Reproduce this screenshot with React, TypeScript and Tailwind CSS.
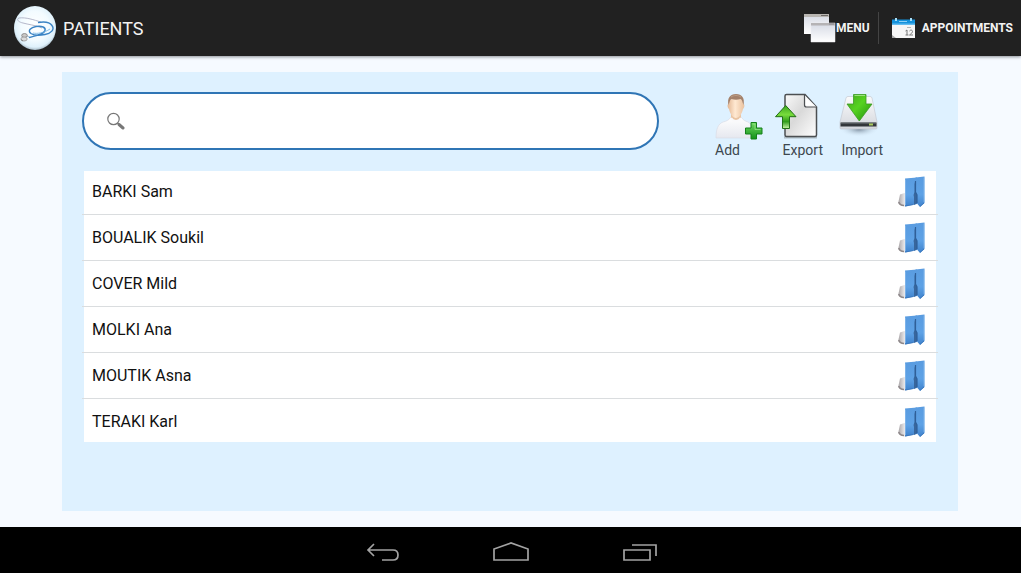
import React, { useState } from 'react';

const patients = ['BARKI Sam', 'BOUALIK Soukil', 'COVER Mild', 'MOLKI Ana', 'MOUTIK Asna', 'TERAKI Karl'];

function Logo() {
  return (
    <svg viewBox="0 0 42 44" className="h-11 w-[42px] shrink-0" aria-hidden="true">
      <defs>
        <radialGradient id="logoBg" cx="50%" cy="45%" r="55%">
          <stop offset="0" stopColor="#ffffff" />
          <stop offset="0.6" stopColor="#f3fbff" />
          <stop offset="0.88" stopColor="#dff1fb" />
          <stop offset="1" stopColor="#a9bcc8" />
        </radialGradient>
      </defs>
      <ellipse cx="21" cy="22" rx="21" ry="22" fill="url(#logoBg)" />
      <path d="M27 16C20 14 12 11 5 12c-3 1-1 4 4 5 5 1.500 12 2 19 5" fill="none" stroke="#aeb0c4" strokeWidth="0.900" />
      <path d="M24 16.500c6-1 12 0 14 3 3 4-1 8-7 9-5 1-11 1-14-1-4-3 0-6 5-7 6-1 10 1 9 4-1 4-9 5-16 7" fill="none" stroke="#3a83c4" strokeWidth="1.400" />
      <path d="M19 27c4 1 11 0 17-4" fill="none" stroke="#69aee2" strokeWidth="0.800" />
      <path d="M15 31c-2-1-3-2-4-1" fill="none" stroke="#8fb4d2" strokeWidth="1" />
      <ellipse cx="10.500" cy="29.500" rx="2.800" ry="2" fill="#c9c8c6" stroke="#807d7d" strokeWidth="0.800" />
      <ellipse cx="10" cy="33" rx="3.200" ry="2" fill="#dadada" stroke="#999" strokeWidth="0.800" />
      <path d="M7 33.500l2 1.500" stroke="#777" strokeWidth="0.800" />
    </svg>
  );
}

function WindowsIcon() {
  return (
    <svg viewBox="0 0 32 30" className="h-[30px] w-8" aria-hidden="true">
      <defs>
        <linearGradient id="win" x1="0" y1="0" x2="0" y2="1">
          <stop offset="0" stopColor="#d5d9e4" />
          <stop offset="1" stopColor="#ffffff" />
        </linearGradient>
      </defs>
      <path d="M0 1h25v20H0z" fill="url(#win)" />
      <path d="M0 1h25v3H0z" fill="#b9b6b2" />
      <path d="M17 2.500h7" stroke="#6d6a68" />
      <path d="M7 10h24v19H7z" fill="url(#win)" stroke="#eceef3" strokeWidth="0.500" />
      <path d="M7 10h24v2.500H7z" fill="#b5b3b5" />
      <path d="M25 11h5" stroke="#85838a" />
    </svg>
  );
}

function CalendarIcon() {
  return (
    <svg viewBox="0 0 25 22" className="h-[22px] w-[25px]" aria-hidden="true">
      <path d="M1 3h23v18H1z" fill="#f6f6f6" />
      <path d="M1 18l4 3H1z" fill="#a5a5a5" />
      <path d="M1 2.500h23V8H1z" fill="#1592dc" />
      <path d="M1 6.500h23V8H1z" fill="#65bdf0" />
      <path d="M8 4.500h8" stroke="#8fd0f5" />
      <path d="M5 1v3M20 1v3" stroke="#a7def8" strokeWidth="2" />
      <path d="M16 10.500h4" stroke="#b5b5b5" />
      <path d="M14.500 14l1.500-1v5m-1.500 0h3M18.500 14c1-1.500 3-1 3 .5 0 1-1 2-3 3.500h3.500" fill="none" stroke="#777" />
    </svg>
  );
}

function AddIcon() {
  return (
    <svg viewBox="0 0 48 48" className="size-12" aria-hidden="true">
      <defs>
        <linearGradient id="shirt" x1="0" y1="0" x2="0" y2="1">
          <stop offset="0" stopColor="#ffffff" />
          <stop offset="1" stopColor="#e6e8ef" />
        </linearGradient>
        <linearGradient id="skin" x1="0" y1="0" x2="1" y2="0">
          <stop offset="0" stopColor="#e3b794" />
          <stop offset="0.45" stopColor="#ffe9d2" />
          <stop offset="1" stopColor="#e9c19e" />
        </linearGradient>
        <linearGradient id="plus" x1="0" y1="0" x2="0" y2="1">
          <stop offset="0" stopColor="#6fd860" />
          <stop offset="1" stopColor="#13911a" />
        </linearGradient>
      </defs>
      <path d="M1 46c0-9 2-14 7-16 4-1 6-2 8-5h10c2 3 4 4 7 5 4 2 5 7 5 16z" fill="url(#shirt)" stroke="#dadde6" strokeWidth="0.700" />
      <path d="M16 21v5c2 4 8 4 10 0v-5z" fill="#e9c4a3" />
      <path d="M16 26c2 4 8 4 10 0" fill="none" stroke="#f9f9fb" strokeWidth="2" />
      <path d="M13.500 12c-1.500 0-1 4 .5 5 1 5 4 9 7 9s6-4 7-9c1.500-1 2-5 .5-5C28 4 14 4 13.500 12z" fill="url(#skin)" />
      <path d="M13.500 13C12 6 15 2 21 2s9 4 7.500 11c-1-2-1-5-3-6-3 1-6 1-9 0-2 1-2 4-3 6z" fill="#a4816a" />
      <path d="M16 5c3-2 7-2 10 0" fill="none" stroke="#bc9c84" />
      <path d="M36 30.500h5.500V36H47v6h-5.500v5H36v-5h-5.500v-6H36z" fill="url(#plus)" stroke="#14801a" strokeLinejoin="round" />
      <path d="M37.500 32h2.500v5.500h5.500" fill="none" stroke="#9be78e" strokeWidth="0.700" />
    </svg>
  );
}

function ExportIcon() {
  return (
    <svg viewBox="0 0 48 48" className="size-12" aria-hidden="true">
      <defs>
        <linearGradient id="paper" x1="0" y1="0" x2="1" y2="1">
          <stop offset="0" stopColor="#fafafa" />
          <stop offset="0.45" stopColor="#d9d9d9" />
          <stop offset="1" stopColor="#ffffff" />
        </linearGradient>
        <linearGradient id="up" x1="0" y1="0" x2="0" y2="1">
          <stop offset="0" stopColor="#3aa51c" />
          <stop offset="0.4" stopColor="#78dc3c" />
          <stop offset="0.7" stopColor="#2f9b1b" />
          <stop offset="1" stopColor="#c9f5a8" />
        </linearGradient>
      </defs>
      <path d="M9 45.500h33" stroke="#aebcc5" strokeWidth="2" />
      <path d="M10 4q0-1.500 1.500-1.500H30L41.500 15v28q0 1.500-1.500 1.500H11.500Q10 44.500 10 43z" fill="url(#paper)" stroke="#4c4f52" strokeWidth="1.500" />
      <path d="M29.500 3v10q0 2 2 2h10" fill="#f7f7f7" stroke="#4c4f52" strokeWidth="1.200" />
      <path d="M31 6v6.500q0 1 1 1h7z" fill="#fff" />
      <path d="M10.700 13.500L21 24.700h-6.500v11.800h-7V24.700H.5z" fill="url(#up)" stroke="#226f16" strokeLinejoin="round" />
    </svg>
  );
}

function ImportIcon() {
  return (
    <svg viewBox="0 0 44 48" className="h-12 w-11" aria-hidden="true">
      <defs>
        <linearGradient id="disk" x1="0" y1="0" x2="0" y2="1">
          <stop offset="0" stopColor="#fbfbfc" />
          <stop offset="1" stopColor="#d3d6dc" />
        </linearGradient>
        <linearGradient id="down" x1="0" y1="0" x2="1" y2="1">
          <stop offset="0" stopColor="#43a51e" />
          <stop offset="0.45" stopColor="#56d321" />
          <stop offset="1" stopColor="#208d0d" />
        </linearGradient>
        <radialGradient id="diskShadow">
          <stop offset="0" stopColor="#78899a" />
          <stop offset="1" stopColor="#def1ff" stopOpacity="0" />
        </radialGradient>
      </defs>
      <ellipse cx="20" cy="37" rx="20" ry="8" fill="url(#diskShadow)" />
      <path d="M7 6q.5-1.500 2-1.500h22q1.500 0 2 1.500l5 24v6q0 1-1 1H2q-1 0-1-1v-6z" fill="url(#disk)" stroke="#c5cad2" strokeWidth="0.700" />
      <path d="M1.500 30.500h36v4h-36z" fill="#33363a" />
      <path d="M2 31h35" stroke="#74787d" />
      <path d="M30 32.500h4" stroke="#a9c95a" strokeWidth="2" />
      <path d="M14.500 2.500H27V12h6L20.300 29 8 12h6.500z" fill="url(#down)" stroke="#3b9b25" strokeWidth="0.800" strokeLinejoin="round" />
      <path d="M15.500 3.500H26" stroke="#9be27c" />
    </svg>
  );
}

function FolderIcon() {
  return (
    <svg viewBox="0 0 28 32" className="h-8 w-7" aria-hidden="true">
      <defs>
        <linearGradient id="folder" x1="0" y1="0" x2="0" y2="1">
          <stop offset="0" stopColor="#5a9ce0" />
          <stop offset="0.6" stopColor="#5ea2e6" />
          <stop offset="1" stopColor="#3f82cc" />
        </linearGradient>
        <linearGradient id="sheet" x1="0" y1="0" x2="1" y2="0">
          <stop offset="0" stopColor="#aaa6a8" />
          <stop offset="0.6" stopColor="#d9d7d9" />
          <stop offset="1" stopColor="#f4f4f6" />
        </linearGradient>
      </defs>
      <path d="M2 18.500l6-2V31l-6.500-2.500q-1.500-1-1-3z" fill="url(#sheet)" />
      <path d="M.7 26q1 3.500 5.300 3.500" fill="none" stroke="#8d8789" strokeWidth="1.500" />
      <path d="M7 2.500L19 1.500V28L7 30.500z" fill="url(#folder)" />
      <path d="M16.500 6q2 5 1 10l2 3v8l-3.500 2v-8q-1-2 .5-5z" fill="#38669c" />
      <path d="M17.500 1.500L26.500.5V27L22 31l-3-3.500V19l-1.500-3z" fill="url(#folder)" />
      <path d="M17.500 5v11l1.500 3v8" fill="none" stroke="#2f5f98" strokeWidth="1.200" />
      <path d="M7.500 3.500V29M26 1.500V26" stroke="#8bbcec" strokeWidth="0.700" />
      <path d="M7.500 30l8-1.500M22 30.500l4-3.500" stroke="#3672b8" strokeWidth="0.800" />
    </svg>
  );
}

function SearchIcon() {
  return (
    <svg viewBox="0 0 18 18" className="size-[18px] shrink-0" fill="none" stroke="#777" aria-hidden="true">
      <circle cx="6.500" cy="7" r="5.700" strokeWidth="1.200" />
      <path d="M10.500 11l2 1.500" strokeWidth="1.500" />
      <path d="M12 12.500l4 3.500" strokeWidth="3" strokeLinecap="round" />
    </svg>
  );
}

function NavButton({ label, children }: { label: string; children: React.ReactNode }) {
  return (
    <button aria-label={label} className="h-9 w-9">
      <svg viewBox="0 0 36 36" className="size-9" fill="none" stroke="#a3a3a3" strokeWidth="1.700">
        {children}
      </svg>
    </button>
  );
}

export default function App() {
  const [query, setQuery] = useState('');
  const shown = patients.filter((name) => name.toLowerCase().includes(query.trim().toLowerCase()));

  return (
    <div className="flex min-h-screen flex-col bg-[#f6faff] font-['Roboto',sans-serif] text-[#111]">
      <header className="flex h-14 items-center justify-between bg-[#212121] pl-[14px] pr-2 text-[#f3f3f3] shadow-[0_1px_3px_#8a8f96]">
        <div className="flex items-center gap-[7px]">
          <Logo />
          <h1 className="text-[18px]">PATIENTS</h1>
        </div>
        <nav className="flex items-center text-xs font-bold">
          <button className="flex items-center">
            <WindowsIcon />
            MENU
          </button>
          <div className="mx-2 h-8 border-l border-[#444]" />
          <button className="ml-1 flex items-center gap-[6px]">
            <CalendarIcon />
            APPOINTMENTS
          </button>
        </nav>
      </header>

      <main className="flex flex-1 flex-col py-4 pl-[62px] pr-[63px]">
        <section className="flex-1 bg-[#def1ff] p-5">
          <div className="mb-[11px] flex items-start">
            <label className="flex h-[58px] flex-1 items-center gap-3 rounded-full border-2 border-[#2f75b5] bg-white px-[23px]">
              <SearchIcon />
              <input
                type="text"
                aria-label="Search patients"
                value={query}
                onChange={(e) => setQuery(e.target.value)}
                className="min-w-0 flex-1 bg-transparent outline-none"
              />
            </label>
            <div className="ml-14 flex w-[223px] gap-3 text-sm text-[#3d474e]">
              <button className="flex w-12 flex-col items-start">
                <AddIcon />
                Add
              </button>
              <button className="flex w-12 flex-col items-end">
                <ExportIcon />
                Export
              </button>
              <button className="flex w-12 flex-col items-end">
                <ImportIcon />
                Import
              </button>
            </div>
          </div>

          <ul>
            {shown.map((name) => (
              <li key={name} className="group border-b border-[#dadddf] last:border-b-0">
                <div className="mx-[2px] flex h-[45px] items-center justify-between bg-white pl-2 pr-[10px] group-first:h-[43px] group-first:pb-[2px] group-last:h-[43px] group-last:pt-[2px]">
                  <span>{name}</span>
                  <button aria-label={'Open file of ' + name}>
                    <FolderIcon />
                  </button>
                </div>
              </li>
            ))}
          </ul>
        </section>
      </main>

      <footer className="flex h-[46px] items-center justify-center gap-[92px] bg-black">
        <NavButton label="Back">
          <path d="M9 12l-6 6 6 6M3 18h25q5 0 5 5t-5 5H17" />
        </NavButton>
        <NavButton label="Home">
          <path d="M1 28V17l17-6 17 6v11z" />
        </NavButton>
        <NavButton label="Recent apps">
          <path d="M3 18h26v10H3zM11 13h24v11" />
        </NavButton>
      </footer>
    </div>
  );
}
